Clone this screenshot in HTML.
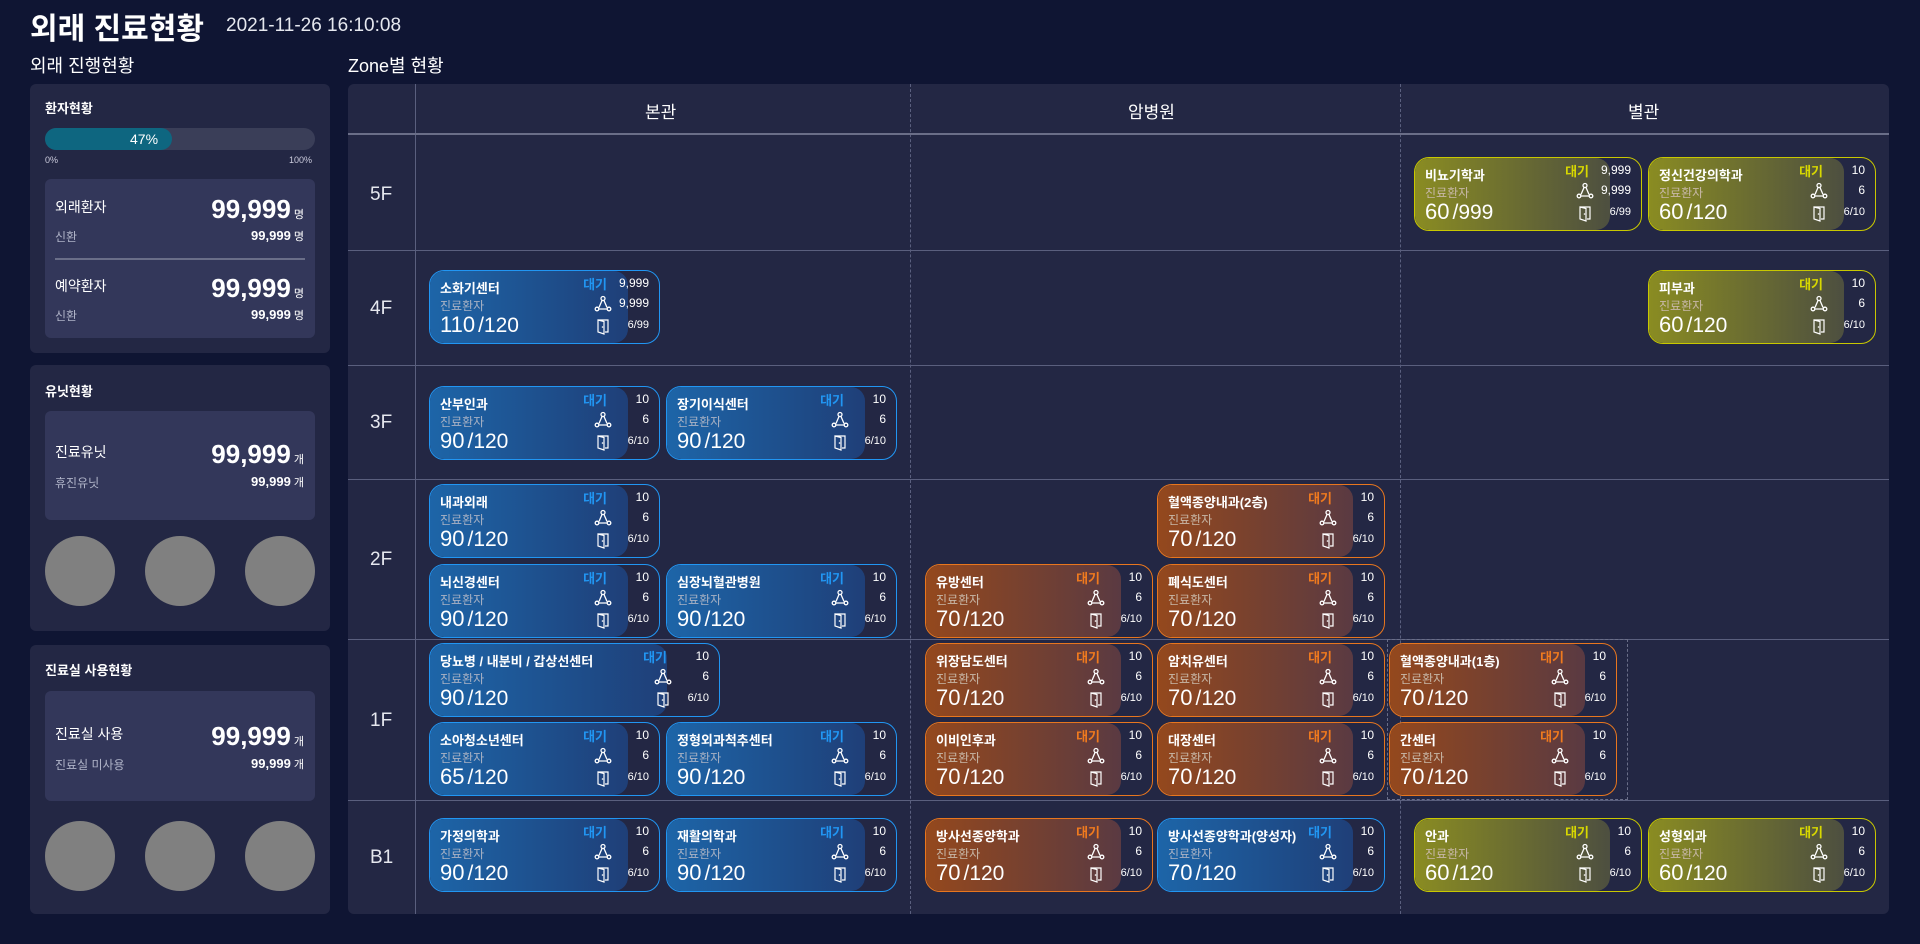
<!DOCTYPE html>
<html><head><meta charset="utf-8"><style>
*{margin:0;padding:0;box-sizing:border-box}
body{width:1920px;height:944px;background:#0f1533;font-family:"Liberation Sans","Noto Sans CJK KR",sans-serif;color:#fff;position:relative;overflow:hidden}
.a{position:absolute;white-space:nowrap}
.panel{position:absolute;background:#232744;border-radius:6px}
.box{position:absolute;background:#33375a;border-radius:6px}
.circ{position:absolute;width:70px;height:70px;border-radius:50%;background:#808080}
.line{position:absolute;background:#5a5f7e}
.c{position:absolute;width:231px;height:74px;border:1.5px solid #2196f3;border-radius:15px;background:#232744;overflow:hidden}
.c i{position:absolute;left:0;top:0;bottom:0;right:31px;border-radius:14px;background:linear-gradient(90deg,#1d65a8,#1f3f78)}
.c.o{border-color:#e8761e}.c.o i{background:linear-gradient(90deg,#94481d,#5a3a42)}
.c.y{border-color:#c8c800}.c.y i{background:linear-gradient(90deg,#8a8c22,#4d4f40)}
.c.w{width:291px}.c.w i{right:52px}
.c.o,.c.y{width:228px}
.c span,.c b,.c svg{position:absolute;white-space:nowrap}
.c .n{left:10px;top:7px;font-size:13px;font-weight:bold}
.c .s{left:10px;top:26px;font-size:12px;color:#a9b2c4}
.c.o .s,.c.y .s{color:#c8b8a8}
.c .g{left:10px;top:41px;font-size:22px}
.c .g em{font-style:normal;font-size:21px;margin-left:3px}
.c .k{right:52px;top:3px;font-size:13px;font-weight:bold;color:#2196f3}
.c.o .k{color:#f07a1e}.c.y .k{color:#d8d800}
.c .v1{right:10px;top:5px;font-size:12px}
.c .v2{right:10px;top:25px;font-size:12px}
.c .v3{right:10px;top:48px;font-size:11px}
.c .i1{right:47px;top:24px;width:18px;height:18px}
.c .i2{right:47px;top:46px;width:18px;height:18px}
</style></head><body>
<svg width="0" height="0" style="position:absolute"><defs>
<symbol id="net" viewBox="0 0 18 18"><g fill="none" stroke="#fff" stroke-width="1.3"><circle cx="9" cy="3.5" r="2"/><circle cx="3" cy="14" r="1.8"/><circle cx="15" cy="14" r="1.8"/><path d="M8 5.5L5 12.5M10 5.5L13 12.5M5 14H13"/></g></symbol>
<symbol id="door" viewBox="0 0 18 18"><g fill="none" stroke="#fff" stroke-width="1.2"><path d="M4 3H14V15H11"/><path d="M4 3L10 4.5V17L4 15Z"/></g><circle cx="8.5" cy="10" r=".8" fill="#fff"/></symbol>
</defs></svg>

<div class="a" style="left:30px;top:4px;font-size:30px;font-weight:bold">외래 진료현황</div>
<div class="a" style="left:226px;top:15px;font-size:19px;color:#e6e8ef">2021-11-26 16:10:08</div>
<div class="a" style="left:30px;top:52px;font-size:18px">외래 진행현황</div>
<div class="a" style="left:348px;top:52px;font-size:18px">Zone별 현황</div>

<div class="panel" style="left:30px;top:84px;width:300px;height:269px"></div>
<div class="a" style="left:45px;top:98px;font-size:13px;font-weight:bold">환자현황</div>
<div class="a" style="left:45px;top:128px;width:270px;height:22px;border-radius:11px;background:#3a3e58"></div>
<div class="a" style="left:45px;top:128px;width:127px;height:22px;border-radius:11px;background:#0e6680"></div>
<div class="a" style="left:130px;top:131px;font-size:14px">47%</div>
<div class="a" style="left:45px;top:155px;font-size:9px;color:#ccd">0%</div>
<div class="a" style="left:289px;top:155px;font-size:9px;color:#ccd">100%</div>
<div class="box" style="left:45px;top:179px;width:270px;height:159px"></div>
<div class="a" style="left:55px;top:197px;font-size:14px">외래환자</div>
<div class="a" style="right:1616px;top:194px;font-size:26px;font-weight:bold">99,999<span style="font-size:11px;font-weight:normal"> 명</span></div>
<div class="a" style="left:55px;top:228px;font-size:12px;color:#b0b4c8">신환</div>
<div class="a" style="right:1616px;top:228px;font-size:13px;font-weight:bold">99,999<span style="font-size:11px;font-weight:normal"> 명</span></div>
<div class="line" style="left:55px;top:258px;width:250px;height:2px;background:#6a6e88"></div>
<div class="a" style="left:55px;top:276px;font-size:14px">예약환자</div>
<div class="a" style="right:1616px;top:273px;font-size:26px;font-weight:bold">99,999<span style="font-size:11px;font-weight:normal"> 명</span></div>
<div class="a" style="left:55px;top:307px;font-size:12px;color:#b0b4c8">신환</div>
<div class="a" style="right:1616px;top:307px;font-size:13px;font-weight:bold">99,999<span style="font-size:11px;font-weight:normal"> 명</span></div>

<div class="panel" style="left:30px;top:365px;width:300px;height:266px"></div>
<div class="a" style="left:45px;top:381px;font-size:13px;font-weight:bold">유닛현황</div>
<div class="box" style="left:45px;top:411px;width:270px;height:109px"></div>
<div class="a" style="left:55px;top:442px;font-size:14px">진료유닛</div>
<div class="a" style="right:1616px;top:439px;font-size:26px;font-weight:bold">99,999<span style="font-size:11px;font-weight:normal"> 개</span></div>
<div class="a" style="left:55px;top:474px;font-size:12px;color:#b0b4c8">휴진유닛</div>
<div class="a" style="right:1616px;top:474px;font-size:13px;font-weight:bold">99,999<span style="font-size:11px;font-weight:normal"> 개</span></div>
<div class="circ" style="left:45px;top:536px"></div><div class="circ" style="left:145px;top:536px"></div><div class="circ" style="left:245px;top:536px"></div>

<div class="panel" style="left:30px;top:645px;width:300px;height:269px"></div>
<div class="a" style="left:45px;top:660px;font-size:13px;font-weight:bold">진료실 사용현황</div>
<div class="box" style="left:45px;top:691px;width:270px;height:110px"></div>
<div class="a" style="left:55px;top:724px;font-size:14px">진료실 사용</div>
<div class="a" style="right:1616px;top:721px;font-size:26px;font-weight:bold">99,999<span style="font-size:11px;font-weight:normal"> 개</span></div>
<div class="a" style="left:55px;top:756px;font-size:12px;color:#b0b4c8">진료실 미사용</div>
<div class="a" style="right:1616px;top:756px;font-size:13px;font-weight:bold">99,999<span style="font-size:11px;font-weight:normal"> 개</span></div>
<div class="circ" style="left:45px;top:821px"></div><div class="circ" style="left:145px;top:821px"></div><div class="circ" style="left:245px;top:821px"></div>

<div class="panel" style="left:348px;top:84px;width:1541px;height:830px"></div>
<div class="line" style="left:415px;top:84px;width:1px;height:830px"></div>
<div class="a" style="left:910px;top:84px;height:830px;border-left:1px dashed #5a5f7e"></div>
<div class="a" style="left:1400px;top:84px;height:830px;border-left:1px dashed #5a5f7e"></div>
<div class="line" style="left:348px;top:133px;width:1541px;height:2px;background:#6a6e88"></div>
<div class="line" style="left:348px;top:250px;width:1541px;height:1px"></div>
<div class="line" style="left:348px;top:365px;width:1541px;height:1px"></div>
<div class="line" style="left:348px;top:479px;width:1541px;height:1px"></div>
<div class="line" style="left:348px;top:639px;width:1541px;height:1px"></div>
<div class="line" style="left:348px;top:800px;width:1541px;height:1px"></div>
<div class="a" style="left:1387px;top:639px;width:241px;height:161px;border:1px dashed #6a6e88"></div>
<div class="a" style="left:645px;top:98px;font-size:17px">본관</div>
<div class="a" style="left:1128px;top:98px;font-size:17px">암병원</div>
<div class="a" style="left:1628px;top:98px;font-size:17px">별관</div>
<div class="a" style="left:370px;top:184px;font-size:19px;color:#e6e8ef">5F</div>
<div class="a" style="left:370px;top:298px;font-size:19px;color:#e6e8ef">4F</div>
<div class="a" style="left:370px;top:412px;font-size:19px;color:#e6e8ef">3F</div>
<div class="a" style="left:370px;top:549px;font-size:19px;color:#e6e8ef">2F</div>
<div class="a" style="left:370px;top:710px;font-size:19px;color:#e6e8ef">1F</div>
<div class="a" style="left:370px;top:847px;font-size:19px;color:#e6e8ef">B1</div>

<div class="c y" style="left:1414px;top:157px"><i></i><b class="n">비뇨기학과</b><span class="s">진료환자</span><span class="g">60<em>/999</em></span><span class="k">대기</span><span class="v1">9,999</span><svg class="i1"><use href="#net"/></svg><span class="v2">9,999</span><svg class="i2"><use href="#door"/></svg><span class="v3">6/99</span></div>
<div class="c y" style="left:1648px;top:157px"><i></i><b class="n">정신건강의학과</b><span class="s">진료환자</span><span class="g">60<em>/120</em></span><span class="k">대기</span><span class="v1">10</span><svg class="i1"><use href="#net"/></svg><span class="v2">6</span><svg class="i2"><use href="#door"/></svg><span class="v3">6/10</span></div>
<div class="c y" style="left:1648px;top:270px"><i></i><b class="n">피부과</b><span class="s">진료환자</span><span class="g">60<em>/120</em></span><span class="k">대기</span><span class="v1">10</span><svg class="i1"><use href="#net"/></svg><span class="v2">6</span><svg class="i2"><use href="#door"/></svg><span class="v3">6/10</span></div>

<div class="c" style="left:429px;top:270px"><i></i><b class="n">소화기센터</b><span class="s">진료환자</span><span class="g">110<em>/120</em></span><span class="k">대기</span><span class="v1">9,999</span><svg class="i1"><use href="#net"/></svg><span class="v2">9,999</span><svg class="i2"><use href="#door"/></svg><span class="v3">6/99</span></div>
<div class="c" style="left:429px;top:386px"><i></i><b class="n">산부인과</b><span class="s">진료환자</span><span class="g">90<em>/120</em></span><span class="k">대기</span><span class="v1">10</span><svg class="i1"><use href="#net"/></svg><span class="v2">6</span><svg class="i2"><use href="#door"/></svg><span class="v3">6/10</span></div>
<div class="c" style="left:666px;top:386px"><i></i><b class="n">장기이식센터</b><span class="s">진료환자</span><span class="g">90<em>/120</em></span><span class="k">대기</span><span class="v1">10</span><svg class="i1"><use href="#net"/></svg><span class="v2">6</span><svg class="i2"><use href="#door"/></svg><span class="v3">6/10</span></div>
<div class="c" style="left:429px;top:484px"><i></i><b class="n">내과외래</b><span class="s">진료환자</span><span class="g">90<em>/120</em></span><span class="k">대기</span><span class="v1">10</span><svg class="i1"><use href="#net"/></svg><span class="v2">6</span><svg class="i2"><use href="#door"/></svg><span class="v3">6/10</span></div>
<div class="c" style="left:429px;top:564px"><i></i><b class="n">뇌신경센터</b><span class="s">진료환자</span><span class="g">90<em>/120</em></span><span class="k">대기</span><span class="v1">10</span><svg class="i1"><use href="#net"/></svg><span class="v2">6</span><svg class="i2"><use href="#door"/></svg><span class="v3">6/10</span></div>
<div class="c" style="left:666px;top:564px"><i></i><b class="n">심장뇌혈관병원</b><span class="s">진료환자</span><span class="g">90<em>/120</em></span><span class="k">대기</span><span class="v1">10</span><svg class="i1"><use href="#net"/></svg><span class="v2">6</span><svg class="i2"><use href="#door"/></svg><span class="v3">6/10</span></div>
<div class="c w" style="left:429px;top:643px"><i></i><b class="n">당뇨병 / 내분비 / 갑상선센터</b><span class="s">진료환자</span><span class="g">90<em>/120</em></span><span class="k">대기</span><span class="v1">10</span><svg class="i1"><use href="#net"/></svg><span class="v2">6</span><svg class="i2"><use href="#door"/></svg><span class="v3">6/10</span></div>
<div class="c" style="left:429px;top:722px"><i></i><b class="n">소아청소년센터</b><span class="s">진료환자</span><span class="g">65<em>/120</em></span><span class="k">대기</span><span class="v1">10</span><svg class="i1"><use href="#net"/></svg><span class="v2">6</span><svg class="i2"><use href="#door"/></svg><span class="v3">6/10</span></div>
<div class="c" style="left:666px;top:722px"><i></i><b class="n">정형외과척추센터</b><span class="s">진료환자</span><span class="g">90<em>/120</em></span><span class="k">대기</span><span class="v1">10</span><svg class="i1"><use href="#net"/></svg><span class="v2">6</span><svg class="i2"><use href="#door"/></svg><span class="v3">6/10</span></div>
<div class="c" style="left:429px;top:818px"><i></i><b class="n">가정의학과</b><span class="s">진료환자</span><span class="g">90<em>/120</em></span><span class="k">대기</span><span class="v1">10</span><svg class="i1"><use href="#net"/></svg><span class="v2">6</span><svg class="i2"><use href="#door"/></svg><span class="v3">6/10</span></div>
<div class="c" style="left:666px;top:818px"><i></i><b class="n">재활의학과</b><span class="s">진료환자</span><span class="g">90<em>/120</em></span><span class="k">대기</span><span class="v1">10</span><svg class="i1"><use href="#net"/></svg><span class="v2">6</span><svg class="i2"><use href="#door"/></svg><span class="v3">6/10</span></div>

<div class="c o" style="left:1157px;top:484px"><i></i><b class="n">혈액종양내과(2층)</b><span class="s">진료환자</span><span class="g">70<em>/120</em></span><span class="k">대기</span><span class="v1">10</span><svg class="i1"><use href="#net"/></svg><span class="v2">6</span><svg class="i2"><use href="#door"/></svg><span class="v3">6/10</span></div>
<div class="c o" style="left:925px;top:564px"><i></i><b class="n">유방센터</b><span class="s">진료환자</span><span class="g">70<em>/120</em></span><span class="k">대기</span><span class="v1">10</span><svg class="i1"><use href="#net"/></svg><span class="v2">6</span><svg class="i2"><use href="#door"/></svg><span class="v3">6/10</span></div>
<div class="c o" style="left:1157px;top:564px"><i></i><b class="n">폐식도센터</b><span class="s">진료환자</span><span class="g">70<em>/120</em></span><span class="k">대기</span><span class="v1">10</span><svg class="i1"><use href="#net"/></svg><span class="v2">6</span><svg class="i2"><use href="#door"/></svg><span class="v3">6/10</span></div>
<div class="c o" style="left:925px;top:643px"><i></i><b class="n">위장담도센터</b><span class="s">진료환자</span><span class="g">70<em>/120</em></span><span class="k">대기</span><span class="v1">10</span><svg class="i1"><use href="#net"/></svg><span class="v2">6</span><svg class="i2"><use href="#door"/></svg><span class="v3">6/10</span></div>
<div class="c o" style="left:1157px;top:643px"><i></i><b class="n">암치유센터</b><span class="s">진료환자</span><span class="g">70<em>/120</em></span><span class="k">대기</span><span class="v1">10</span><svg class="i1"><use href="#net"/></svg><span class="v2">6</span><svg class="i2"><use href="#door"/></svg><span class="v3">6/10</span></div>
<div class="c o" style="left:1389px;top:643px"><i></i><b class="n">혈액종양내과(1층)</b><span class="s">진료환자</span><span class="g">70<em>/120</em></span><span class="k">대기</span><span class="v1">10</span><svg class="i1"><use href="#net"/></svg><span class="v2">6</span><svg class="i2"><use href="#door"/></svg><span class="v3">6/10</span></div>
<div class="c o" style="left:925px;top:722px"><i></i><b class="n">이비인후과</b><span class="s">진료환자</span><span class="g">70<em>/120</em></span><span class="k">대기</span><span class="v1">10</span><svg class="i1"><use href="#net"/></svg><span class="v2">6</span><svg class="i2"><use href="#door"/></svg><span class="v3">6/10</span></div>
<div class="c o" style="left:1157px;top:722px"><i></i><b class="n">대장센터</b><span class="s">진료환자</span><span class="g">70<em>/120</em></span><span class="k">대기</span><span class="v1">10</span><svg class="i1"><use href="#net"/></svg><span class="v2">6</span><svg class="i2"><use href="#door"/></svg><span class="v3">6/10</span></div>
<div class="c o" style="left:1389px;top:722px"><i></i><b class="n">간센터</b><span class="s">진료환자</span><span class="g">70<em>/120</em></span><span class="k">대기</span><span class="v1">10</span><svg class="i1"><use href="#net"/></svg><span class="v2">6</span><svg class="i2"><use href="#door"/></svg><span class="v3">6/10</span></div>
<div class="c o" style="left:925px;top:818px"><i></i><b class="n">방사선종양학과</b><span class="s">진료환자</span><span class="g">70<em>/120</em></span><span class="k">대기</span><span class="v1">10</span><svg class="i1"><use href="#net"/></svg><span class="v2">6</span><svg class="i2"><use href="#door"/></svg><span class="v3">6/10</span></div>
<div class="c" style="left:1157px;top:818px;width:228px"><i></i><b class="n">방사선종양학과(양성자)</b><span class="s">진료환자</span><span class="g">70<em>/120</em></span><span class="k">대기</span><span class="v1">10</span><svg class="i1"><use href="#net"/></svg><span class="v2">6</span><svg class="i2"><use href="#door"/></svg><span class="v3">6/10</span></div>
<div class="c y" style="left:1414px;top:818px"><i></i><b class="n">안과</b><span class="s">진료환자</span><span class="g">60<em>/120</em></span><span class="k">대기</span><span class="v1">10</span><svg class="i1"><use href="#net"/></svg><span class="v2">6</span><svg class="i2"><use href="#door"/></svg><span class="v3">6/10</span></div>
<div class="c y" style="left:1648px;top:818px"><i></i><b class="n">성형외과</b><span class="s">진료환자</span><span class="g">60<em>/120</em></span><span class="k">대기</span><span class="v1">10</span><svg class="i1"><use href="#net"/></svg><span class="v2">6</span><svg class="i2"><use href="#door"/></svg><span class="v3">6/10</span></div>
</body></html>
